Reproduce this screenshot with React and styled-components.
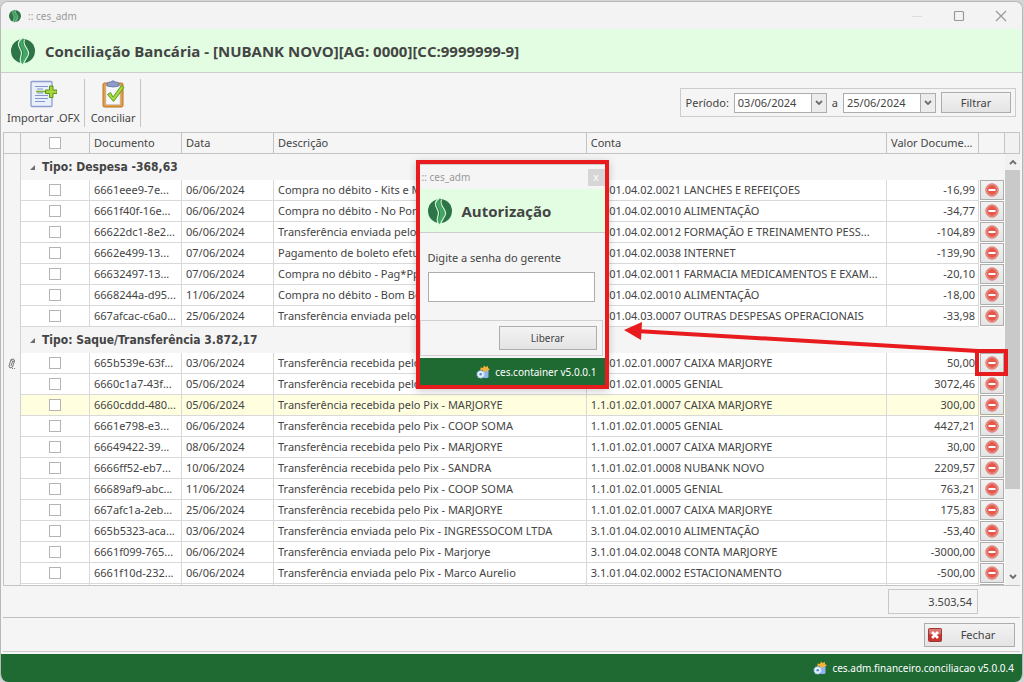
import React, { useState } from 'react';
import styled, { createGlobalStyle } from 'styled-components';

const initialGroups = [
    {
        title: 'Tipo: Despesa -368,63',
        rows: [
            { doc: '6661eee9-7e...', date: '06/06/2024', desc: 'Compra no débito - Kits e M', account: '3.1.01.04.02.0021 LANCHES E REFEIÇOES', value: '-16,99' },
            { doc: '6661f40f-16e...', date: '06/06/2024', desc: 'Compra no débito - No Pon', account: '3.1.01.04.02.0010 ALIMENTAÇÃO', value: '-34,77' },
            { doc: '66622dc1-8e2...', date: '06/06/2024', desc: 'Transferência enviada pelo Pix', account: '3.1.01.04.02.0012 FORMAÇÃO E TREINAMENTO PESS...', value: '-104,89' },
            { doc: '6662e499-13...', date: '07/06/2024', desc: 'Pagamento de boleto efetuado', account: '3.1.01.04.02.0038 INTERNET', value: '-139,90' },
            { doc: '66632497-13...', date: '07/06/2024', desc: 'Compra no débito - Pag*Pp', account: '3.1.01.04.02.0011 FARMACIA MEDICAMENTOS E EXAM...', value: '-20,10' },
            { doc: '6668244a-d95...', date: '11/06/2024', desc: 'Compra no débito - Bom Bo', account: '3.1.01.04.02.0010 ALIMENTAÇÃO', value: '-18,00' },
            { doc: '667afcac-c6a0...', date: '25/06/2024', desc: 'Transferência enviada pelo Pix', account: '3.1.01.04.03.0007 OUTRAS DESPESAS OPERACIONAIS', value: '-33,98' },
        ],
    },
    {
        title: 'Tipo: Saque/Transferência 3.872,17',
        rows: [
            { doc: '665b539e-63f...', date: '03/06/2024', desc: 'Transferência recebida pelo Pix', account: '1.1.01.02.01.0007 CAIXA MARJORYE', value: '50,00', editing: true },
            { doc: '6660c1a7-43f...', date: '05/06/2024', desc: 'Transferência recebida pelo Pix', account: '1.1.01.02.01.0005 GENIAL', value: '3072,46' },
            { doc: '6660cddd-480...', date: '05/06/2024', desc: 'Transferência recebida pelo Pix - MARJORYE', account: '1.1.01.02.01.0007 CAIXA MARJORYE', value: '300,00', selected: true },
            { doc: '6661e798-e3...', date: '06/06/2024', desc: 'Transferência recebida pelo Pix - COOP SOMA', account: '1.1.01.02.01.0005 GENIAL', value: '4427,21' },
            { doc: '66649422-39...', date: '08/06/2024', desc: 'Transferência recebida pelo Pix - MARJORYE', account: '1.1.01.02.01.0007 CAIXA MARJORYE', value: '30,00' },
            { doc: '6666ff52-eb7...', date: '10/06/2024', desc: 'Transferência recebida pelo Pix - SANDRA', account: '1.1.01.02.01.0008 NUBANK NOVO', value: '2209,57' },
            { doc: '66689af9-abc...', date: '11/06/2024', desc: 'Transferência recebida pelo Pix - COOP SOMA', account: '1.1.01.02.01.0005 GENIAL', value: '763,21' },
            { doc: '667afc1a-2eb...', date: '25/06/2024', desc: 'Transferência recebida pelo Pix - MARJORYE', account: '1.1.01.02.01.0007 CAIXA MARJORYE', value: '175,83' },
            { doc: '665b5323-aca...', date: '03/06/2024', desc: 'Transferência enviada pelo Pix - INGRESSOCOM LTDA', account: '3.1.01.04.02.0010 ALIMENTAÇÃO', value: '-53,40' },
            { doc: '6661f099-765...', date: '06/06/2024', desc: 'Transferência enviada pelo Pix - Marjorye', account: '3.1.01.04.02.0048 CONTA MARJORYE', value: '-3000,00' },
            { doc: '6661f10d-232...', date: '06/06/2024', desc: 'Transferência enviada pelo Pix - Marco Aurelio', account: '3.1.01.04.02.0002 ESTACIONAMENTO', value: '-500,00' },
            { doc: '', date: '', desc: '', account: '', value: '' },
        ],
    },
];

const Logo = ({ size }) => (
    <svg width={size} height={size} viewBox="0 0 28 28" aria-hidden="true">
        <circle cx="14" cy="14" r="12" fill="#2d7547" />
        <path d="M14.500 0.500 C7 6 14 11 14 16 C14 21 10 22 13.500 27.500 C15 24 19 21 18.500 16.500 C18 11.500 11 7 14.500 0.500Z" fill="#3fa862" />
        <path d="M13.500 1 C5 7 12.500 11.500 12.500 16 C12.500 20 9.500 22 12 26.500" fill="none" stroke="#d3f3d6" strokeWidth="1.200" />
        <path d="M15.500 2.500 C12.500 9 20.500 11.500 19.500 17 C19 20.500 15.500 23 14.500 27" fill="none" stroke="#d3f3d6" strokeWidth="1.200" />
    </svg>
);

const ImportIcon = () => (
    <svg width="28" height="28" viewBox="0 0 28 28" aria-hidden="true">
        <rect x="2" y="1.5" width="21" height="25" rx="1" fill="#e9effb" stroke="#8c9fcd" strokeWidth="1.3" />
        <path d="M6 6.5H19M6 15.5H19M6 18.5H19M6 21.5H16" stroke="#8496c9" strokeWidth="1.2" />
        <path d="M8 9H14M8 13H14" stroke="#8496c9" strokeWidth="1" />
        <path d="M7 11.500H17" stroke="#7fb52b" strokeWidth="1.4" />
        <path d="M20.500 6h3.500v4h4v3.500h-4v4h-3.500v-4h-4v-3.500h4z" fill="#a5d63a" stroke="#5d8f1c" strokeWidth="1" />
    </svg>
);

const ClipboardIcon = () => (
    <svg width="28" height="28" viewBox="0 0 28 28" aria-hidden="true">
        <rect x="4" y="3" width="20" height="24" rx="1.5" fill="#e3a04c" stroke="#b97524" />
        <path d="M7 5.500H21V24.500H7z" fill="#f7f9fe" stroke="#c4cbe0" strokeWidth="0.6" />
        <path d="M8 6 V3.500 Q9 2 11.500 2 Q14 -0.500 16.500 2 Q19 2 20 3.500 V6 Q14 8 8 6Z" fill="#8e9dc8" stroke="#5f6f9f" strokeWidth="0.8" />
        <path d="M8.500 14.500 L11.500 12.500 L14 17 L22.500 5.500 L25 7.500 L14.500 21.500 Z" fill="#a5d93c" stroke="#5f9a1e" strokeWidth="1" />
    </svg>
);

const RemoveIcon = () => (
    <svg width="14" height="14" viewBox="0 0 14 14" aria-hidden="true">
        <circle cx="7" cy="7" r="6.200" fill="#f0a29a" stroke="#cf5f56" strokeWidth="0.8" />
        <circle cx="7" cy="7" r="4.900" fill="#e5584c" />
        <rect x="3.500" y="5.900" width="7" height="2.200" rx="0.400" fill="#fff" />
    </svg>
);

const CloseRedIcon = () => (
    <svg width="14" height="14" viewBox="0 0 14 14" aria-hidden="true">
        <rect x="0.500" y="0.500" width="13" height="13" rx="1" fill="#c9332f" stroke="#9c3a36" />
        <path d="M1 1H13V6Q7 8 1 6Z" fill="#db7672" />
        <path d="M4 4L10 10M10 4L4 10" stroke="#fff" strokeWidth="2.600" />
    </svg>
);

const GearsIcon = () => (
    <svg width="14" height="14" viewBox="0 0 14 14" aria-hidden="true">
        <rect x="7" y="3" width="5.500" height="10" rx="1.500" fill="#8fb4ee" />
        <path d="M4.500 2.500 L7 3 L8 0.500 L9.500 2 L12 1 L12 3 L14 4.500 L11.500 5.500 L9 7 L7 5.500 L4.500 5Z" fill="#f7b03a" />
        <circle cx="4.700" cy="9.300" r="3.600" fill="#e6f0ff" stroke="#a9c8f5" strokeWidth="1.200" strokeDasharray="1.500 0.800" />
        <circle cx="4.700" cy="9.300" r="1.300" fill="#5b87cf" />
    </svg>
);

const PencilIcon = () => (
    <svg width="8" height="12" viewBox="0 0 8 12" aria-hidden="true">
        <path d="M3 1.500 L5.500 1 L6.500 3 L4.500 9 L2 10 L1 8 Z M3 1.500 L4.500 3.500 L6.500 3 M4.500 3.500 L3 8" fill="none" stroke="#666" strokeWidth="0.900" />
        <path d="M4 10.500H8" stroke="#777" strokeDasharray="1 1" />
    </svg>
);

const Chevron = ({ up }) => (
    <svg width="8" height="6" viewBox="0 0 8 6" aria-hidden="true">
        <path d={up ? 'M1 5L4 2L7 5' : 'M1 1L4 4L7 1'} fill="none" stroke="#6e6e6e" strokeWidth="1.800" />
    </svg>
);

const App = () => {
    const [dateFrom, setDateFrom] = useState('03/06/2024');
    const [dateTo, setDateTo] = useState('25/06/2024');
    const [password, setPassword] = useState('');

    return (
        <>
            <GlobalStyle />
            <Desktop>
                <Window>
                    <TitleBar>
                        <Logo size={14} />
                        <TitleText>:: ces_adm</TitleText>
                        <WindowButton aria-label="Minimizar">
                            <svg width="12" height="12" viewBox="0 0 12 12"><path d="M1 6.500H11" stroke="#ddd" /></svg>
                        </WindowButton>
                        <WindowButton aria-label="Maximizar">
                            <svg width="12" height="12" viewBox="0 0 12 12"><rect x="1.500" y="1.500" width="9" height="9" rx="1" fill="none" stroke="#999" strokeWidth="1.200" /></svg>
                        </WindowButton>
                        <WindowButton aria-label="Fechar janela">
                            <svg width="12" height="12" viewBox="0 0 12 12"><path d="M1 1L11 11M11 1L1 11" stroke="#999" strokeWidth="1.200" /></svg>
                        </WindowButton>
                    </TitleBar>
                    <Banner>
                        <Logo size={28} />
                        <PageTitle>Conciliação Bancária - [NUBANK NOVO][AG: 0000][CC:9999999-9]</PageTitle>
                    </Banner>

                    <Toolbar>
                        <ToolButton><ImportIcon />Importar .OFX</ToolButton>
                        <Separator />
                        <ToolButton><ClipboardIcon />Conciliar</ToolButton>
                        <Separator />
                        <Filter onSubmit={(e) => e.preventDefault()}>
                            <label htmlFor="from">Período:</label>
                            <DateBox>
                                <DateInput id="from" value={dateFrom} onChange={(e) => setDateFrom(e.target.value)} />
                                <DropButton type="button" aria-label="Abrir calendário inicial"><Chevron /></DropButton>
                            </DateBox>
                            <label htmlFor="to">a</label>
                            <DateBox>
                                <DateInput id="to" value={dateTo} onChange={(e) => setDateTo(e.target.value)} />
                                <DropButton type="button" aria-label="Abrir calendário final"><Chevron /></DropButton>
                            </DateBox>
                            <FilterButton type="submit">Filtrar</FilterButton>
                        </Filter>
                    </Toolbar>

                    <GridWrap>
                        <GridView>
                            <Grid>
                                <colgroup>
                                    <Col $w="17px" />
                                    <Col $w="69px" />
                                    <Col $w="92px" />
                                    <Col $w="92px" />
                                    <Col />
                                    <Col $w="30%" />
                                    <Col $w="92px" />
                                    <Col $w="26px" />
                                </colgroup>
                                <thead>
                                    <tr>
                                        <HeadCell />
                                        <HeadCell $center><Check type="checkbox" aria-label="Selecionar todos" /></HeadCell>
                                        <HeadCell>Documento</HeadCell>
                                        <HeadCell>Data</HeadCell>
                                        <HeadCell>Descrição</HeadCell>
                                        <HeadCell>Conta</HeadCell>
                                        <HeadCell>Valor Docume...</HeadCell>
                                        <HeadCell />
                                    </tr>
                                </thead>
                                {initialGroups.map((group) => (
                                    <tbody key={group.title}>
                                        <tr>
                                            <Indicator />
                                            <GroupCell colSpan={7}>
                                                <Expander aria-hidden="true" />
                                                {group.title}
                                            </GroupCell>
                                        </tr>
                                        {group.rows.map((row, i) => (
                                            <Row key={i} $selected={row.selected}>
                                                <Indicator>{row.editing && <PencilIcon />}</Indicator>
                                                <Cell $center><Check type="checkbox" aria-label={'Selecionar ' + row.doc} /></Cell>
                                                <Cell>{row.doc}</Cell>
                                                <Cell>{row.date}</Cell>
                                                <Cell>{row.desc}</Cell>
                                                <Cell>{row.account}</Cell>
                                                <Cell $right>{row.value}</Cell>
                                                <ActionCell>
                                                    <RemoveButton aria-label="Remover"><RemoveIcon /></RemoveButton>
                                                </ActionCell>
                                            </Row>
                                        ))}
                                    </tbody>
                                ))}
                            </Grid>
                        </GridView>
                        <ScrollBar>
                            <ScrollCorner />
                            <ScrollArrow aria-label="Rolar para cima"><Chevron up /></ScrollArrow>
                            <ScrollThumb />
                            <ScrollSpace />
                            <ScrollArrow aria-label="Rolar para baixo"><Chevron /></ScrollArrow>
                        </ScrollBar>
                    </GridWrap>

                    <Summary><Total>3.503,54</Total></Summary>
                    <Actions>
                        <CloseButton><CloseRedIcon /><span>Fechar</span></CloseButton>
                    </Actions>
                    <StatusBar><GearsIcon />ces.adm.financeiro.conciliacao v5.0.0.4</StatusBar>
                </Window>

                <Arrow width="408" height="60" viewBox="0 0 408 60" aria-hidden="true">
                    <path d="M20 11 L362 31" stroke="#e81c1f" strokeWidth="4" />
                    <path d="M8 10 L26 2 L25 20 Z" fill="#e81c1f" />
                    <rect x="361" y="31" width="29" height="23" fill="none" stroke="#e81c1f" strokeWidth="4" />
                </Arrow>

                <Overlay>
                    <Dialog role="dialog" aria-label="Autorização">
                        <DialogTitleBar>
                            :: ces_adm
                            <DialogClose aria-label="Fechar diálogo">x</DialogClose>
                        </DialogTitleBar>
                        <DialogBanner>
                            <Logo size={28} />
                            <PageTitle as="h2">Autorização</PageTitle>
                        </DialogBanner>
                        <DialogBody>
                            <label htmlFor="password">Digite a senha do gerente</label>
                            <PasswordInput id="password" type="password" value={password} onChange={(e) => setPassword(e.target.value)} />
                        </DialogBody>
                        <DialogActions>
                            <ReleaseButton>Liberar</ReleaseButton>
                        </DialogActions>
                        <DialogStatus><GearsIcon />ces.container v5.0.0.1</DialogStatus>
                    </Dialog>
                </Overlay>
            </Desktop>
        </>
    );
};

export default App;

const GlobalStyle = createGlobalStyle`
    * {
        box-sizing: border-box;
    }
    body {
        margin: 0;
        font-family: 'Noto Sans', sans-serif;
        font-size: 11px;
        color: #444;
    }
    button, input {
        font: inherit;
        color: inherit;
        margin: 0;
        padding: 0;
    }
    svg {
        flex: none;
        display: block;
    }
`

const Desktop = styled.div`
    position: relative;
    height: 100vh;
    padding: 1px 1px 0 0;
    background-color: #d4d4d4;
    overflow: hidden;
`
const Window = styled.main`
    height: 100%;
    display: flex;
    flex-direction: column;
    border: 1px solid #b8b8b8;
    border-bottom: none;
    border-radius: 8px;
    background-color: #f5f5f5;
    overflow: hidden;
`
const TitleBar = styled.header`
    flex: none;
    display: flex;
    align-items: center;
    height: 27px;
    padding: 0 6px 0 7px;
    background-color: #f3f3f3;
`
const TitleText = styled.span`
    flex: 1;
    padding-left: 6px;
    color: #999;
    font-size: 10px;
`
const WindowButton = styled.button`
    display: flex;
    align-items: center;
    justify-content: center;
    width: 30px;
    height: 26px;
    margin-left: 12px;
    border: none;
    background: none;
`
const Banner = styled.div`
    flex: none;
    display: flex;
    align-items: center;
    gap: 8px;
    height: 44px;
    padding-left: 8px;
    background-color: #e2fde2;
    border-bottom: 1px solid #ccc;
`
const PageTitle = styled.h1`
    margin: 0;
    font-family: 'Open Sans', sans-serif;
    font-size: 15px;
    font-weight: 700;
`
const Toolbar = styled.div`
    flex: none;
    display: flex;
    align-items: center;
    height: 59px;
    padding-right: 6px;
`
const ToolButton = styled.button`
    display: flex;
    flex-direction: column;
    align-items: center;
    gap: 2px;
    padding: 0 4px 0 6px;
    border: none;
    background: none;
`
const Separator = styled.div`
    width: 1px;
    height: 48px;
    background-color: #c4c4c4;
`
const Filter = styled.form`
    display: flex;
    align-items: center;
    margin-left: auto;
    gap: 5px;
    height: 29px;
    padding: 0 4px 0 5px;
    border: 1px solid #ccc;
`
const DateBox = styled.div`
    display: flex;
    width: 93px;
    height: 20px;
    border: 1px solid #adadad;
    background-color: white;
`
const DateInput = styled.input`
    flex: 1;
    min-width: 0;
    padding-left: 3px;
    border: none;
    background: none;
`
const DropButton = styled.button`
    display: flex;
    align-items: center;
    justify-content: center;
    width: 15px;
    border: none;
    border-left: 1px solid #adadad;
    background-color: #ececec;
`
const PushButton = styled.button`
    border: 1px solid #adadad;
    background: linear-gradient(#f3f3f3, #e4e4e4);
`
const FilterButton = styled(PushButton)`
    width: 70px;
    height: 21px;
`
const GridWrap = styled.div`
    flex: 1;
    min-height: 0;
    display: flex;
    margin: 0 2px;
    border-top: 1px solid #c4c4c4;
    border-bottom: 1px solid #c4c4c4;
`
const GridView = styled.div`
    flex: 1;
    min-width: 0;
    overflow: hidden;
    border-left: 1px solid #c4c4c4;
`
const Grid = styled.table`
    width: 100%;
    table-layout: fixed;
    border-collapse: separate;
    border-spacing: 0;
`
const Col = styled.col`
    width: ${(props) => props.$w || 'auto'};
`
const HeadCell = styled.th`
    height: 21px;
    padding: 0 0 0 ${(props) => props.$center ? '0' : '4px'};
    border-right: 1px solid #c4c4c4;
    border-bottom: 1px solid #c4c4c4;
    font-weight: 400;
    line-height: 18px;
    text-align: left;
    white-space: nowrap;
`
const Indicator = styled.td`
    padding: 0 0 0 4px;
    border-right: 1px solid #d2d2d2;
    background-color: #f5f5f5;
`
const GroupCell = styled.td`
    height: 26px;
    padding: 0 9px;
    background-color: #f5f5f5;
    font-family: 'DejaVu Sans Condensed', 'DejaVu Sans', sans-serif;
    font-size: 12px;
    font-weight: 700;
`
const Expander = styled.span`
    display: inline-block;
    margin-right: 7px;
    border-left: 5px solid transparent;
    border-bottom: 5px solid #6e6e6e;
    vertical-align: 1px;
`
const Row = styled.tr`
    background-color: ${(props) => props.$selected ? '#ffffdf' : 'white'};
`
const Cell = styled.td`
    height: 21px;
    padding: ${(props) => props.$center ? '0' : props.$right ? '0 3px 0 0' : '0 0 0 4px'};
    border-right: 1px solid #d9d9d9;
    border-bottom: 1px solid #d9d9d9;
    line-height: 18px;
    text-align: ${(props) => props.$right ? 'right' : 'left'};
    white-space: nowrap;
`
const Check = styled.input`
    display: block;
    width: 12px;
    height: 12px;
    margin: 0 auto;
    appearance: none;
    border: 1px solid #b4b4b4;
    background-color: white;
`
const ActionCell = styled.td`
    height: 21px;
    padding: 0 1px;
    vertical-align: top;
`
const RemoveButton = styled(PushButton)`
    display: flex;
    align-items: center;
    justify-content: center;
    width: 100%;
    height: 20px;
`
const ScrollBar = styled.div`
    display: flex;
    flex-direction: column;
    width: 15px;
    background-color: #f1f1f1;
`
const ScrollCorner = styled.div`
    height: 21px;
    border-right: 1px solid #c4c4c4;
    border-bottom: 1px solid #c4c4c4;
`
const ScrollArrow = styled.button`
    display: flex;
    align-items: center;
    justify-content: center;
    height: 16px;
    border: none;
    background: none;
`
const ScrollThumb = styled.div`
    flex: 4;
    background-color: #c9c9c9;
`
const ScrollSpace = styled.div`
    flex: 1;
`
const Summary = styled.div`
    flex: none;
    display: flex;
    justify-content: flex-end;
    align-items: center;
    height: 32px;
    margin: 0 2px;
    padding-right: 42px;
    border-bottom: 1px solid #c0c0c0;
`
const Total = styled.output`
    width: 90px;
    height: 25px;
    padding-right: 5px;
    border: 1px solid #c8c8c8;
    line-height: 23px;
    text-align: right;
`
const Actions = styled.div`
    flex: none;
    display: flex;
    justify-content: flex-end;
    align-items: center;
    height: 34px;
    margin: 0 2px 2px;
    padding-right: 5px;
    border-bottom: 1px solid #ccc;
`
const CloseButton = styled(PushButton)`
    display: flex;
    align-items: center;
    width: 91px;
    height: 24px;
    padding-left: 3px;
    span {
        flex: 1;
    }
`
const StatusBar = styled.footer`
    flex: none;
    display: flex;
    align-items: center;
    justify-content: flex-end;
    gap: 5px;
    height: 28px;
    padding: 0 8px;
    background-color: #1f6a33;
    color: white;
    font-size: 10px;
`
const Arrow = styled.svg`
    position: absolute;
    top: 320px;
    right: 0;
    pointer-events: none;
`
const Overlay = styled.div`
    position: absolute;
    inset: 0;
    display: flex;
    justify-content: center;
    align-items: flex-start;
    padding-top: 160px;
    pointer-events: none;
`
const Dialog = styled.section`
    width: 193px;
    border: 4px solid #e81c1f;
    background-color: #f5f5f5;
    box-shadow: 0 2px 8px rgba(0, 0, 0, 0.2);
    pointer-events: auto;
`
const DialogTitleBar = styled.div`
    display: flex;
    align-items: center;
    justify-content: space-between;
    height: 25px;
    padding-left: 2px;
    border-top: 1px solid #ccc;
    color: #999;
    font-size: 10px;
`
const DialogClose = styled.button`
    width: 17px;
    height: 17px;
    border: none;
    background-color: #d6d6d6;
    color: white;
    line-height: 14px;
`
const DialogBanner = styled(Banner)`
    padding-left: 6px;
`
const DialogBody = styled.div`
    display: flex;
    flex-direction: column;
    gap: 6px;
    padding: 17px 10px 18px 8px;
    line-height: 16px;
`
const PasswordInput = styled.input`
    width: 100%;
    height: 30px;
    padding: 0 4px;
    border: 1px solid #adadad;
    background-color: white;
`
const DialogActions = styled.div`
    display: flex;
    justify-content: flex-end;
    align-items: center;
    height: 36px;
    margin: 0 2px 2px 0;
    padding-right: 5px;
    border: 1px solid #d0d0d0;
`
const ReleaseButton = styled(PushButton)`
    width: 98px;
    height: 24px;
    font-size: 10px;
`
const DialogStatus = styled(StatusBar)`
    height: 27px;
`
